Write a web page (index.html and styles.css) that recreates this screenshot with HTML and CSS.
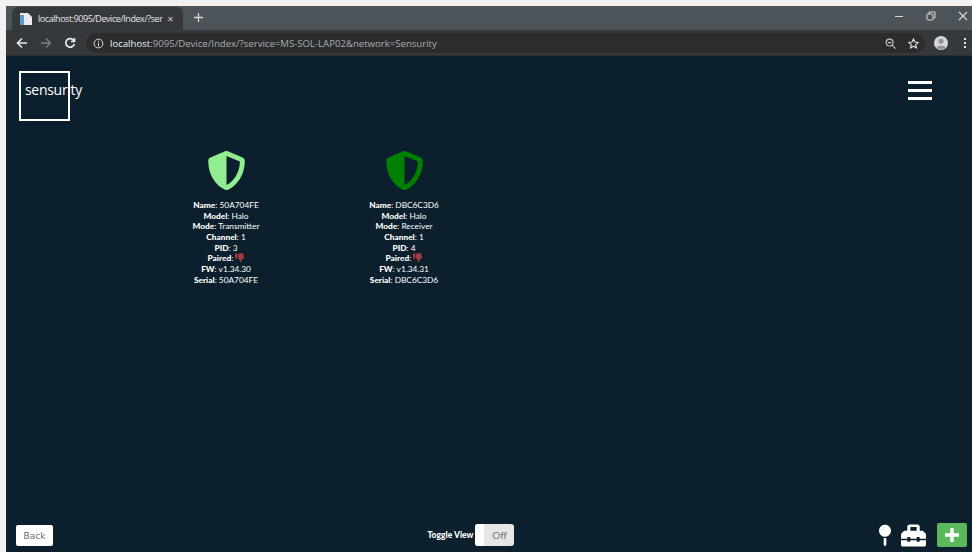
FILE: index.html
```html
<!DOCTYPE html>
<html lang="en">
<head>
<meta charset="utf-8">
<title>Devices</title>
<link rel="stylesheet" href="styles.css">
</head>
<body>
<div class="window">
  <div class="tabstrip">
    <div class="tab">
      <svg class="favicon" viewBox="0 0 12 13"><path fill="#e8eaed" d="M0 1h8l4 4v8H0z"/><path fill="#5b9bd5" d="M0 3h4v10H0z"/></svg>
      <span class="tab-title">localhost:9095/Device/Index/?ser</span>
      <span class="tab-close">✕</span>
    </div>
    <svg class="newtab" viewBox="0 0 10 10"><path d="M5 0v10M0 5h10" stroke="#d5d8da" stroke-width="1.4"/></svg>
    <div class="winctl">
      <svg viewBox="0 0 10 10"><path d="M1 5.500h8" stroke="#d5d8da"/></svg>
      <svg viewBox="0 0 10 10" fill="none" stroke="#d5d8da"><rect x="1" y="3" width="6" height="6" rx="1"/><path d="M3 3V1h6v6H7"/></svg>
      <svg viewBox="0 0 10 10"><path d="M1 1l8 8M9 1l-8 8" stroke="#d5d8da" stroke-width="1.1"/></svg>
    </div>
  </div>
  <div class="toolbar">
    <svg class="nav" viewBox="0 0 12 12" fill="none" stroke="#e8eaed" stroke-width="1.6"><path d="M11 6H2M6 1.500 1.500 6 6 10.500"/></svg>
    <svg class="nav" viewBox="0 0 12 12" fill="none" stroke="#7b8084" stroke-width="1.3"><path d="M1 6h9M6 1.500 10.500 6 6 10.500"/></svg>
    <svg class="nav" viewBox="0 0 12 12" fill="none" stroke="#e8eaed" stroke-width="1.7"><path d="M10 4A4.300 4.300 0 1 0 10.300 7"/><path d="M10.500 1v3.500H7" /></svg>
    <div class="omnibox">
      <svg class="info" viewBox="0 0 12 12" fill="none" stroke="#e8eaed"><circle cx="6" cy="6" r="4.800"/><path d="M6 3v1.200M6 5.200V9"/></svg>
      <span class="url"><span class="host">localhost</span>:9095/Device/Index/?service=MS-SOL-LAP02&amp;network=Sensurity</span>
      <svg class="omni-icon zoom" viewBox="0 0 12 12" fill="none" stroke="#c4c7c9" stroke-width="1.200"><circle cx="5" cy="5" r="3.800"/><path d="M8 8l3.500 3.500M3 5h4"/></svg>
      <svg class="omni-icon" viewBox="0 0 12 12" fill="none" stroke="#e0e2e4" stroke-width="1.200"><path d="M6 1l1.500 3.400 3.700.4-2.800 2.400.8 3.600L6 9l-3.200 1.800.8-3.600L.8 4.800l3.700-.4z"/></svg>
    </div>
    <svg class="avatar" viewBox="0 0 14 14"><circle cx="7" cy="7" r="7" fill="#d5d7d9"/><circle cx="7" cy="5.200" r="2.500" fill="#8f9396"/><path d="M2.500 11.500C3.500 9 10.500 9 11.500 11.500A7 7 0 0 1 2.500 11.500z" fill="#8f9396"/></svg>
    <span class="kebab"><i></i><i></i><i></i></span>
  </div>

  <main class="page">
    <header class="page-head">
      <div class="logo"><span>sensurity</span></div>
      <button class="menu" type="button" aria-label="Menu"><i></i><i></i><i></i></button>
    </header>

    <section class="devices">
      <article class="device">
        <svg class="shield shield-tx" viewBox="0 0 512 512"><path d="M466.500 83.700l-192-80a48.150 48.150 0 0 0-36.900 0l-192 80C27.700 91.100 16 108.600 16 128c0 198.500 114.500 335.700 221.500 380.300 11.800 4.900 25.100 4.900 36.900 0C360.100 472.600 496 349.300 496 128c0-19.400-11.700-36.900-29.500-44.300zM256.100 446.300l-.1-381 175.900 73.300c-3.300 151.400-82.100 261.100-175.800 307.700z"/></svg>
        <p><b>Name</b>: 50A704FE</p>
        <p><b>Model</b>: Halo</p>
        <p><b>Mode</b>: Transmitter</p>
        <p><b>Channel</b>: 1</p>
        <p><b>PID</b>: 3</p>
        <p><b>Paired</b>: <svg class="thumb" viewBox="0 0 512 512"><use href="#thumb-down"/></svg></p>
        <p><b>FW</b>: v1.34.30</p>
        <p><b>Serial</b>: 50A704FE</p>
      </article>
      <article class="device">
        <svg class="shield shield-rx" viewBox="0 0 512 512"><path d="M466.500 83.700l-192-80a48.150 48.150 0 0 0-36.900 0l-192 80C27.700 91.100 16 108.600 16 128c0 198.500 114.500 335.700 221.500 380.300 11.800 4.900 25.100 4.900 36.900 0C360.100 472.600 496 349.300 496 128c0-19.400-11.700-36.900-29.500-44.300zM256.100 446.300l-.1-381 175.900 73.300c-3.300 151.400-82.100 261.100-175.800 307.700z"/></svg>
        <p><b>Name</b>: DBC6C3D6</p>
        <p><b>Model</b>: Halo</p>
        <p><b>Mode</b>: Receiver</p>
        <p><b>Channel</b>: 1</p>
        <p><b>PID</b>: 4</p>
        <p><b>Paired</b>: <svg class="thumb" viewBox="0 0 512 512"><use href="#thumb-down"/></svg></p>
        <p><b>FW</b>: v1.34.31</p>
        <p><b>Serial</b>: DBC6C3D6</p>
      </article>
    </section>

    <footer class="page-foot">
      <button class="back" type="button">Back</button>
      <div class="toggle-group">
        <span class="toggle-label">Toggle View</span>
        <div class="toggle"><span class="knob"></span><span class="state">Off</span></div>
      </div>
      <div class="actions">
        <svg class="pin" viewBox="0 0 288 512"><path d="M112 316.940v156.690l22.020 33.020c4.750 7.120 15.220 7.120 19.970 0L176 473.630V316.940c-10.390 1.920-21.060 3.060-32 3.060s-21.610-1.140-32-3.060zM144 0C64.470 0 0 64.470 0 144s64.470 144 144 144 144-64.470 144-144S223.530 0 144 0z"/><path class="pin-glint" d="M64 144c0-44 36-80 80-80"/></svg>
        <svg class="toolbox" viewBox="0 0 512 512"><path d="M502.630 214.630l-45.250-45.250c-6-6-14.140-9.370-22.630-9.370H384V80c0-26.510-21.490-48-48-48H176c-26.510 0-48 21.490-48 48v80H77.250c-8.490 0-16.620 3.370-22.630 9.370L9.370 214.630c-6 6-9.370 14.140-9.370 22.630V320h128v-16c0-8.840 7.160-16 16-16h32c8.840 0 16 7.160 16 16v16h128v-16c0-8.840 7.160-16 16-16h32c8.840 0 16 7.160 16 16v16h128v-82.750c0-8.480-3.370-16.620-9.370-22.620zM320 160H192V80h128v80zm64 208c0 8.840-7.160 16-16 16h-32c-8.840 0-16-7.160-16-16v-16H192v16c0 8.840-7.160 16-16 16h-32c-8.840 0-16-7.160-16-16v-16H0v96c0 17.670 14.330 32 32 32h448c17.670 0 32-14.330 32-32v-96H384v16z"/></svg>
        <button class="add" type="button" aria-label="Add"><svg viewBox="0 0 14 14"><path d="M7 1v12M1 7h12" stroke="#fff" stroke-width="3.400" stroke-linecap="round"/></svg></button>
      </div>
    </footer>
  </main>
</div>
<svg class="sprite" aria-hidden="true"><symbol id="thumb-down" viewBox="0 0 512 512"><path d="M0 56v240c0 13.255 10.745 24 24 24h80c13.255 0 24-10.745 24-24V56c0-13.255-10.745-24-24-24H24C10.745 32 0 42.745 0 56zm40 200c0-13.255 10.745-24 24-24s24 10.745 24 24-10.745 24-24 24-24-10.745-24-24zm272 256c-20.183 0-29.485-39.293-33.931-57.795-5.206-21.666-10.589-44.070-25.393-58.902-32.469-32.524-49.503-73.967-89.117-113.111a11.980 11.980 0 0 1-3.558-8.521V59.901c0-6.541 5.243-11.878 11.783-11.998 15.831-.29 36.694-9.079 52.651-16.178C256.189 17.598 295.709.017 343.995 0h2.844c42.777 0 93.363.413 113.774 29.737 8.392 12.057 10.446 27.034 6.148 44.632 16.312 17.053 25.063 48.863 16.382 74.757 17.544 23.432 19.143 56.132 9.308 79.469l.11.11c11.893 11.949 19.523 31.259 19.439 49.197-.156 30.352-26.157 58.098-59.553 58.098H350.723C358.030 364.340 384 388.132 384 430.548 384 504 336 512 312 512z"/></symbol></svg>
</body>
</html>
```

FILE: styles.css
```css
* { box-sizing: border-box; }

html, body { height: 100%; }

body {
  margin: 0;
  padding: 6px 0 0 6px;
  background: #f1f1f1;
  font-family: "Lato", "Liberation Sans", sans-serif;
  overflow: hidden;
}

.sprite { display: none; }

.window {
  height: 546px;
  display: flex;
  flex-direction: column;
}

/* Browser tab strip */
.tabstrip {
  height: 24px;
  flex: none;
  display: flex;
  align-items: flex-end;
  background: #4d5459;
  padding-left: 6px;
}

.tab {
  width: 171px;
  height: 23px;
  display: flex;
  align-items: center;
  padding: 0 6px 1px 8px;
  background: #36393c;
  border-radius: 6px 6px 0 0;
  color: #e3e5e6;
  font: 9px "Open Sans", "Liberation Sans", sans-serif;
}

.favicon { width: 12px; height: 13px; flex: none; margin-right: 6px; }

.tab-title { flex: none; white-space: nowrap; letter-spacing: -0.44px; }

.tab-close { font-size: 8px; margin: 0 0 0 5px; color: #c9cccd; }

.newtab { width: 9px; height: 9px; margin: 0 0 8px 11px; }

.winctl {
  margin-left: auto;
  align-self: flex-start;
  display: flex;
  gap: 22px;
  padding: 5px 4px 0 0;
}

.winctl svg { width: 10px; height: 10px; }

/* Browser address row */
.toolbar {
  height: 26px;
  flex: none;
  display: flex;
  align-items: center;
  background: #36393c;
  padding: 1px 6px 0 10px;
  border-bottom: 1px solid #2b2e30;
}

.nav { width: 12px; height: 12px; flex: none; margin-right: 12px; }

.omnibox {
  width: 842px;
  height: 20px;
  margin-left: -2px;
  display: flex;
  align-items: center;
  padding: 0 6px 0 7px;
  border-radius: 10px;
  background: #2a2c2e;
  color: #a9adb0;
  font: 9.600px "Open Sans", "Liberation Sans", sans-serif;
}

.info { width: 11px; height: 11px; flex: none; margin-right: 6px; }

.url { flex: 1; white-space: nowrap; }

.host { color: #eceeef; }

.omni-icon { width: 11px; height: 11px; flex: none; }

.omni-icon.zoom { margin-right: 12px; }

.avatar { width: 14px; height: 14px; flex: none; margin-left: 9px; }

.kebab { display: flex; flex-direction: column; gap: 2px; margin-left: 16px; }

.kebab i { width: 2px; height: 2px; background: #e3e5e6; }

/* Application page */
.page {
  flex: 1;
  min-height: 0;
  display: flex;
  flex-direction: column;
  background: #0c1f2d;
  color: #fff;
}

.page-head {
  display: flex;
  justify-content: space-between;
  align-items: flex-start;
  padding: 15px 40px 0 13px;
}

.logo {
  width: 51px;
  height: 50px;
  display: flex;
  align-items: center;
  padding: 0 0 14px 4px;
  border: 2px solid #fff;
  font: 500 14px "Open Sans", "Liberation Sans", sans-serif;
  letter-spacing: -0.3px;
  white-space: nowrap;
}

.menu {
  width: 24px;
  height: 19px;
  margin-top: 10px;
  padding: 0;
  border: 0;
  background: none;
  display: flex;
  flex-direction: column;
  justify-content: space-between;
}

.menu i { display: block; height: 3px; background: #fff; }

.devices {
  display: flex;
  padding: 30px 0 0 131px;
  gap: 0;
}

.device {
  width: 178px;
  text-align: center;
  font-size: 8.300px;
  line-height: 10.700px;
}

.device p { margin: 0; height: 10.700px; white-space: nowrap; }

.device b { font-weight: 900; }

.shield { display: block; width: 39px; height: 39px; margin: 0 auto 10px; }

.shield-tx { fill: #90ee90; }

.shield-rx { fill: #008000; }

.thumb { width: 9px; height: 9px; fill: #a33a3f; vertical-align: -1px; }

.page-foot {
  margin-top: auto;
  height: 30px;
  display: flex;
  justify-content: space-between;
  align-items: center;
  padding: 0 5px 4px 10px;
}

.back {
  width: 37px;
  height: 21px;
  margin-top: 1px;
  padding: 0;
  border: 0;
  border-radius: 2px;
  background: #fff;
  color: #6b6b6b;
  font: 9px "DejaVu Sans", "Liberation Sans", sans-serif;
}

.toggle-group { display: flex; align-items: center; gap: 2px; margin-left: 10px; }

.toggle-label { font-size: 8.500px; font-weight: 900; white-space: nowrap; }

.toggle {
  width: 39px;
  height: 22px;
  display: flex;
  align-items: center;
  border-radius: 3px;
  background: #e6e6e6;
  overflow: hidden;
}

.knob { width: 9px; height: 100%; background: #fff; }

.state { flex: 1; text-align: center; color: #777; font-size: 10px; }

.actions { display: flex; align-items: center; }

.pin { width: 12px; height: 23px; fill: #fff; margin-right: 10px; }

.pin-glint { fill: none; stroke: #c9ced2; stroke-width: 16; }

.toolbox { width: 25px; height: 25px; fill: #fff; margin-right: 11px; }

.add {
  width: 30px;
  height: 24px;
  padding: 0;
  border: 0;
  border-radius: 2px;
  background: #5cb85c;
  display: flex;
  align-items: center;
  justify-content: center;
}

.add svg { width: 14px; height: 14px; }
```
